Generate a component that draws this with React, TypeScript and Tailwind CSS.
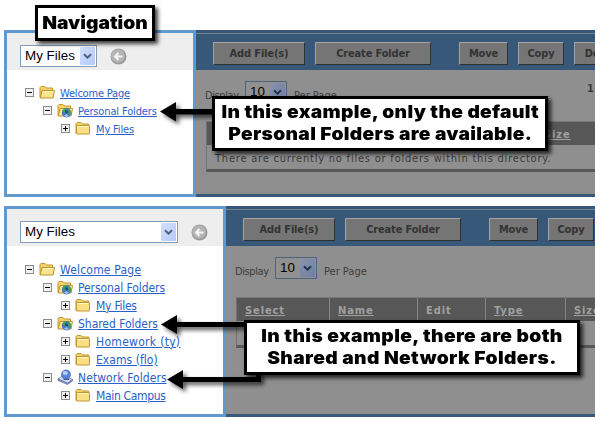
import type { ReactNode } from "react";

type IconKind = "open" | "folder" | "globe" | "network";

type TreeItem = {
  label: string;
  depth: 0 | 1 | 2;
  icon: IconKind;
  expanded: boolean;
  text: string;
};

const defaultTree: TreeItem[] = [
  { label: "Welcome Page", depth: 0, icon: "open", expanded: true, text: "text-[11px] tracking-[-0.2px]" },
  { label: "Personal Folders", depth: 1, icon: "globe", expanded: true, text: "text-[11px] tracking-[-0.13px]" },
  { label: "My Files", depth: 2, icon: "folder", expanded: false, text: "text-[11px] tracking-[-0.15px]" },
];

const fullTree: TreeItem[] = [
  { label: "Welcome Page", depth: 0, icon: "open", expanded: true, text: "text-xs tracking-[0.2px]" },
  { label: "Personal Folders", depth: 1, icon: "globe", expanded: true, text: "text-xs tracking-[-0.08px]" },
  { label: "My Files", depth: 2, icon: "folder", expanded: false, text: "text-xs tracking-[-0.25px]" },
  { label: "Shared Folders", depth: 1, icon: "globe", expanded: true, text: "text-xs tracking-[-0.03px]" },
  { label: "Homework (ty)", depth: 2, icon: "folder", expanded: false, text: "text-xs tracking-[0.3px]" },
  { label: "Exams (flo)", depth: 2, icon: "folder", expanded: false, text: "text-xs tracking-[0.05px]" },
  { label: "Network Folders", depth: 1, icon: "network", expanded: true, text: "text-xs tracking-[0.08px]" },
  { label: "Main Campus", depth: 2, icon: "folder", expanded: false, text: "text-xs tracking-[-0.33px]" },
];

const indent = { 0: "pl-[18px]", 1: "pl-[36px]", 2: "pl-[54px]" };

function Expander({ expanded }: { expanded: boolean }) {
  return (
    <svg width="9" height="9" viewBox="0 0 9 9" className="mt-[5px] shrink-0" shapeRendering="crispEdges">
      <rect x="0.5" y="0.5" width="8" height="8" fill="#f1f1ee" stroke="#8b8b8b" />
      <path d={expanded ? "M2 4.5h5" : "M2 4.5h5M4.5 2v5"} stroke="#000" />
    </svg>
  );
}

function Globe() {
  return (
    <>
      <circle cx="9.5" cy="10.8" r="4.700" fill="#4379bd" />
      <path d="M5.200 9C6.500 7 8.500 6 10 6.300L8.500 9 7 11zM11.500 6.800l2.700 2.700-.3 3-2.700-1.500z" fill="#3fa748" />
      <path d="M8 8.500c1.500-.8 3.500.3 3 2.500H8.500z" fill="#25497f" />
      <path d="M7 13.500l2.500-1.500 2.200 1.500-2 2z" fill="#9dc0ee" />
    </>
  );
}

function TreeIcon({ kind }: { kind: IconKind }) {
  if (kind === "network") {
    return (
      <svg width="17" height="16" viewBox="0 0 17 16" className="shrink-0">
        <path d="M1 10l5-3.500 9.500 4-5 4z" fill="#d6def3" stroke="#6478ab" strokeWidth="0.800" />
        <path d="M1 10v1.500l9.500 4 5-3.500v-1.500l-5 3.600z" fill="#8799c8" stroke="#5468a0" strokeWidth="0.600" />
        <path d="M5.500 9.500h6l1 1.500H7z" fill="#3c5796" />
        <circle cx="9" cy="5.500" r="4.500" fill="#5b83dc" stroke="#3b5ba9" strokeWidth="0.700" />
        <ellipse cx="8.200" cy="4" rx="2.600" ry="2" fill="#b9cef9" />
      </svg>
    );
  }
  return (
    <svg width="16" height="16" viewBox="0 0 16 16" className="shrink-0">
      <path
        d="M1 13.500V3.500L2 2.500h4l1.500 1.500H13.500V6l.5 7.500z"
        fill="#f3d267"
        stroke="#c1962f"
        strokeWidth="1"
      />
      {kind === "folder" ? (
        <>
          <rect x="1.500" y="5.500" width="13" height="8.500" rx="0.500" fill="#fae084" stroke="#c1962f" />
          <path d="M2.500 6.500h11" stroke="#fff8cb" />
        </>
      ) : (
        <>
          <path d="M1.200 14L3 6.500h12.500L14 14z" fill="#fbe48d" stroke="#bd922f" />
          <path d="M4 7.500h10.500" stroke="#fff8cb" />
        </>
      )}
      {kind === "globe" && <Globe />}
    </svg>
  );
}

function Tree({ items, top }: { items: TreeItem[]; top: string }) {
  return (
    <div className={top}>
      {items.map((item) => (
        <div key={item.label} className={`flex h-[18px] items-start ${indent[item.depth]}`}>
          <Expander expanded={item.expanded} />
          <span className="flex w-[26px] shrink-0 pl-[5px] pt-px">
            <TreeIcon kind={item.icon} />
          </span>
          <a
            className={`whitespace-nowrap leading-[21px] text-[#2b60c8] underline decoration-1 underline-offset-1 ${item.text}`}
          >
            {item.label}
          </a>
        </div>
      ))}
    </div>
  );
}

function SelectBox({ value, size, dim }: { value: string; size: string; dim?: boolean }) {
  return (
    <div
      className={`flex h-[22px] shrink-0 items-center justify-between border p-px pl-1 font-['Liberation_Sans',sans-serif] text-[13.4px] text-black ${size} ${
        dim ? "border-[#4e6478] bg-[#919191]" : "border-[#7f9db9] bg-white"
      }`}
    >
      <span className="whitespace-nowrap pt-px">{value}</span>
      <span
        className={`flex h-[18px] w-[15px] items-center justify-center rounded-[1px] ${
          dim ? "bg-gradient-to-br from-[#8894b0] to-[#6f7d9d]" : "bg-gradient-to-br from-[#d3e0fd] to-[#b4c9f7]"
        }`}
      >
        <svg width="9" height="7" viewBox="0 0 9 7">
          <path d="M1 1.200l3.500 3.500L8 1.200" fill="none" stroke={dim ? "#25344b" : "#4d6185"} strokeWidth="2" />
        </svg>
      </span>
    </div>
  );
}

function BackButton() {
  return (
    <svg width="17" height="17" viewBox="0 0 17 17" className="shrink-0">
      <circle cx="8.500" cy="8.500" r="8" fill="#9b9b9b" />
      <circle cx="8" cy="8" r="6.800" fill="#b5b5b5" />
      <path d="M12.500 8.500H6M8.500 5L5 8.500 8.500 12" fill="none" stroke="#f6f6f6" strokeWidth="2" />
    </svg>
  );
}

function Sidebar({
  width,
  selectSize,
  treeTop,
  items,
}: {
  width: string;
  selectSize: string;
  treeTop: string;
  items: TreeItem[];
}) {
  return (
    <div className={`shrink-0 border-[3px] border-[#6199cf] bg-white ${width}`}>
      <div className="flex h-[37px] items-start bg-[#eeeeee] pl-[13px] pt-3">
        <SelectBox value="My Files" size={selectSize} />
        <span className="ml-[13px] mt-[3px]">
          <BackButton />
        </span>
      </div>
      <Tree items={items} top={treeTop} />
    </div>
  );
}

function ToolButton({ label, size }: { label: string; size: string }) {
  return (
    <div
      className={`flex h-[23px] shrink-0 items-center justify-center whitespace-nowrap border-b border-r border-l border-t border-b-[#303030] border-l-[#a2a2a2] border-r-[#303030] border-t-[#a2a2a2] bg-[#757575] pt-[2px] text-[11px] font-bold tracking-[-0.15px] text-[#333] ${size}`}
    >
      {label}
    </div>
  );
}

function HeaderCell({ label, size, plain }: { label: string; size: string; plain?: boolean }) {
  return (
    <div
      className={`shrink-0 border-r border-[#858585] pl-2 text-[11px] font-bold leading-[25px] tracking-[0.9px] text-[#a0a0a0] ${size}`}
    >
      <span className={plain ? "" : "underline underline-offset-1"}>{label}</span>
    </div>
  );
}

function FilePane({ pageCount, message }: { pageCount?: string; message?: string }) {
  return (
    <div className="min-w-0 flex-1 overflow-hidden border-b-[3px] border-[#38587a] bg-[#8f8f8f]">
      <div className="h-[40px] bg-[#38587a] pt-[3px]">
        <div className="h-px bg-[#76838f]" />
        <div className="flex pl-[17px] pt-2">
          <ToolButton label="Add File(s)" size="w-[92px]" />
          <ToolButton label="Create Folder" size="ml-[10px] w-[116px]" />
          <ToolButton label="Move" size="ml-7 w-[49px]" />
          <ToolButton label="Copy" size="ml-[10px] w-[46px]" />
          <ToolButton label="Delete" size="ml-[10px] w-[57px]" />
        </div>
      </div>
      <div className="flex h-[51px] items-start pl-[9px] pt-[11px] text-[11px] text-[#3d3d3d]">
        <span className="w-[40px] shrink-0 leading-[29px] tracking-[-0.4px]">Display</span>
        <SelectBox value="10" size="w-[42px]" dim />
        <span className="ml-[7px] shrink-0 whitespace-nowrap leading-[29px] tracking-[0px]">Per Page</span>
        {pageCount && <span className="ml-auto pr-[1px] font-bold leading-[15px]">{pageCount}</span>}
      </div>
      <div className="ml-[10px] border-b-[3px] border-l border-t border-b-[#585858] border-l-[#707070] border-t-[#777]">
        <div className="flex h-[23px] bg-[#575757]">
          <HeaderCell label="Select" size="w-[93px]" />
          <HeaderCell label="Name" size="w-[88px]" />
          <HeaderCell label="Edit" size="w-[68px]" plain />
          <HeaderCell label="Type" size="w-[80px]" />
          <HeaderCell label="Size" size="w-[80px]" />
        </div>
        <div className="h-[24px] whitespace-nowrap pl-[8px] text-[11px] leading-[27px] tracking-[0.79px] text-[#3a3a3a]">
          {message}
        </div>
      </div>
    </div>
  );
}

function Callout({ place, text, children }: { place: string; text: string; children: ReactNode }) {
  return (
    <div
      className={`absolute flex items-center justify-center border-[3px] border-black bg-white pb-[2px] shadow-[3px_3px_4px_rgba(0,0,0,0.75)] ${place}`}
    >
      <div
        className={`flex origin-center scale-x-110 flex-col items-center whitespace-nowrap font-['Inter',sans-serif] text-[17.5px] font-black text-black ${text}`}
      >
        {children}
      </div>
    </div>
  );
}

export default function App() {
  return (
    <div className="relative flex h-[421px] w-[600px] flex-col gap-[9px] overflow-hidden bg-white pl-1 pr-[5px] pt-[30px] font-['DejaVu_Sans_Condensed','DejaVu_Sans',sans-serif]">
      <section className="flex h-[167px]">
        <Sidebar width="w-[192px]" selectSize="w-[77px]" treeTop="pt-[13px]" items={defaultTree} />
        <FilePane pageCount="1" message="There are currently no files or folders within this directory." />
      </section>
      <section className="flex h-[211px]">
        <Sidebar width="w-[222px]" selectSize="w-[158px]" treeTop="pt-[14px]" items={fullTree} />
        <FilePane />
      </section>

      <svg className="absolute inset-0 drop-shadow-[3px_3px_2px_rgba(0,0,0,0.65)]" width="600" height="421">
        <path d="M160 111.500L176 102v7h40v5.500h-40v7z" />
        <path d="M161 324.500L177 315v7h70v5h-70v7z" />
        <path d="M167 379.500L183 370v7h73v-5h5v10h-78v7z" />
      </svg>

      <Callout place="left-[35px] top-[5px] h-[36px] w-[120px]" text="leading-[21px]">
        <span>Navigation</span>
      </Callout>
      <Callout place="left-[212px] top-[96px] h-[55px] w-[336px]" text="leading-[21.5px] tracking-[0.28px]">
        <span>In this example, only the default</span>
        <span>Personal Folders are available.</span>
      </Callout>
      <Callout place="left-[244px] top-[320px] h-[55px] w-[336px]" text="leading-[21.5px] tracking-[0.33px]">
        <span>In this example, there are both</span>
        <span>Shared and Network Folders.</span>
      </Callout>
    </div>
  );
}
